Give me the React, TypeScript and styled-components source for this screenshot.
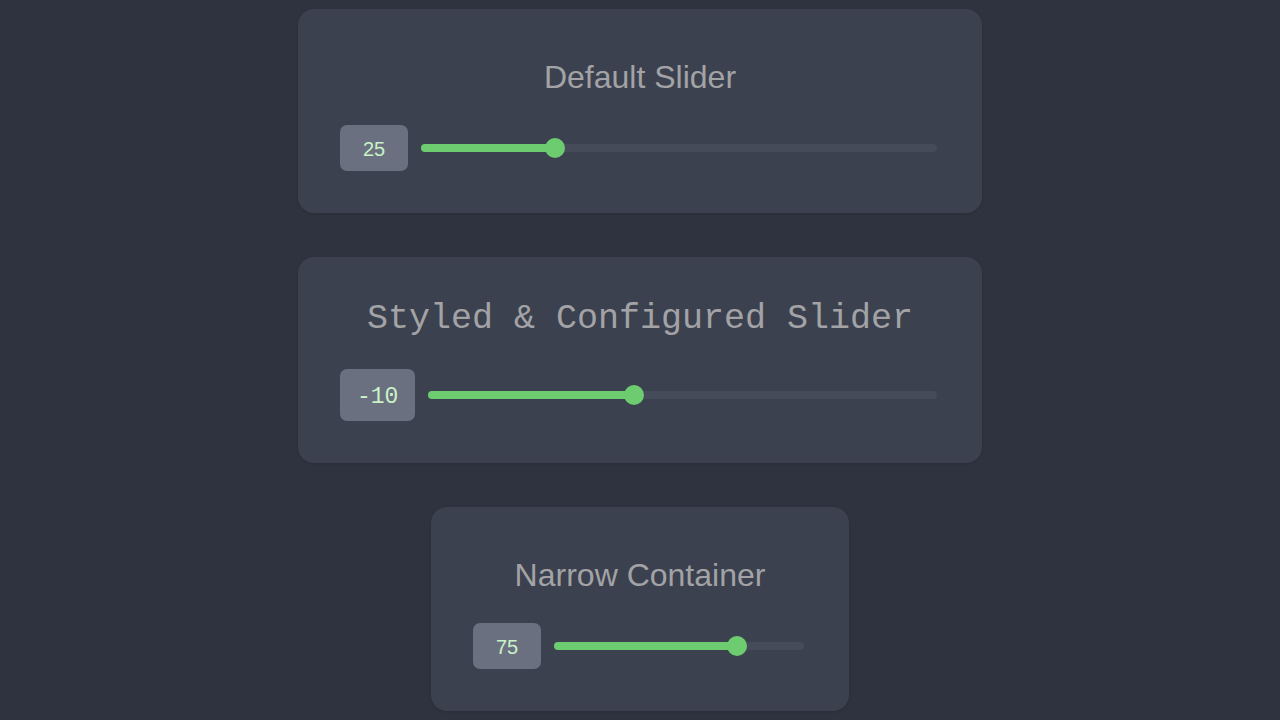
import React from "react";
import styled, { createGlobalStyle } from "styled-components";

const GlobalStyle = createGlobalStyle`
  html, body {
    margin: 0;
    padding: 0;
    background: #2f333f;
    font-family: "Liberation Sans", Arial, sans-serif;
  }
`;

const Page = styled.div`
  display: flex;
  flex-direction: column;
  align-items: center;
  gap: 44px;
  padding-top: 9px;
  min-height: 720px;
  box-sizing: border-box;
`;

const Card = styled.div<{ $width: number }>`
  width: ${(p) => p.$width}px;
  box-sizing: border-box;
  background: #3b414f;
  border-radius: 16px;
  padding: 48px 42px 42px;
  display: flex;
  flex-direction: column;
  box-shadow: 0 1px 3px rgba(0, 0, 0, 0.12);
`;

const Title = styled.h2<{ $mono?: boolean }>`
  margin: ${(p) => (p.$mono ? "-6px 0 30px" : "0 0 28px")};
  text-align: center;
  color: #a3a3a6;
  font-weight: 400;
  line-height: 40px;
  font-family: ${(p) =>
    p.$mono ? `"Liberation Mono", "DejaVu Sans Mono", monospace` : `"Liberation Sans", Arial, sans-serif`};
  font-size: ${(p) => (p.$mono ? "35px" : "32px")};
`;

const Row = styled.div`
  display: flex;
  align-items: center;
  gap: 13px;
`;

const ValueBox = styled.div<{ $mono?: boolean }>`
  flex: none;
  box-sizing: border-box;
  height: ${(p) => (p.$mono ? "52px" : "46px")};
  padding: 3px ${(p) => (p.$mono ? "17px" : "23px")} 0;
  min-width: 68px;
  display: flex;
  align-items: center;
  justify-content: center;
  background: #6b7080;
  border-radius: 7px;
  color: #c9f2c6;
  font-family: ${(p) =>
    p.$mono ? `"Liberation Mono", "DejaVu Sans Mono", monospace` : `"Liberation Sans", Arial, sans-serif`};
  font-size: ${(p) => (p.$mono ? "23px" : "20px")};
`;

const Track = styled.div`
  position: relative;
  flex: 1;
  height: 8px;
  margin-right: 3px;
  border-radius: 4px;
  background: #454b59;
`;

const Fill = styled.div`
  position: absolute;
  left: 0;
  top: 0;
  bottom: 0;
  border-radius: 4px;
  background: #6dcc70;
`;

const Thumb = styled.div`
  position: absolute;
  top: 50%;
  width: 20px;
  height: 20px;
  margin: -10px 0 0 -10px;
  border-radius: 50%;
  background: #6dcc70;
`;

const THUMB = 20;

const Slider = ({
  value,
  min = 0,
  max = 100,
  mono = false,
}: {
  value: number;
  min?: number;
  max?: number;
  mono?: boolean;
}) => {
  const pct = (value - min) / (max - min);
  const pos = `calc(${pct} * (100% - ${THUMB}px) + ${THUMB / 2}px)`;
  return (
    <Row>
      <ValueBox $mono={mono}>{value}</ValueBox>
      <Track>
        <Fill style={{ width: pos }} />
        <Thumb style={{ left: pos }} />
      </Track>
    </Row>
  );
};

export default function App() {
  return (
    <>
      <GlobalStyle />
      <Page>
        <Card $width={684}>
          <Title>Default Slider</Title>
          <Slider value={25} />
        </Card>
        <Card $width={684}>
          <Title $mono>Styled &amp; Configured Slider</Title>
          <Slider value={-10} min={-50} max={50} mono />
        </Card>
        <Card $width={418}>
          <Title>Narrow Container</Title>
          <Slider value={75} />
        </Card>
      </Page>
    </>
  );
}
